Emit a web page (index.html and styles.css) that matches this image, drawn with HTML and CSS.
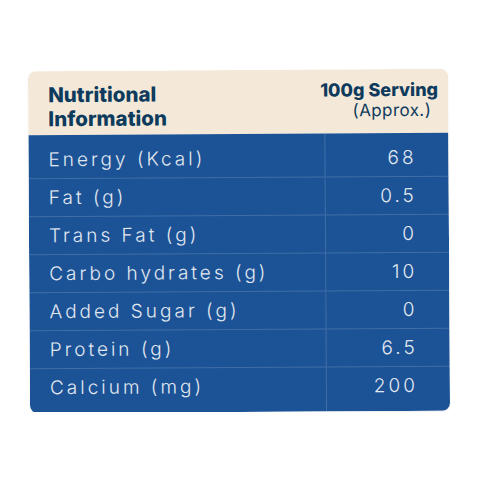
FILE: index.html
```html
<!DOCTYPE html>
<html lang="en">
<head>
  <meta charset="UTF-8">
  <meta name="viewport" content="width=device-width, initial-scale=1.0">
  <title>Nutritional Information</title>
  <link rel="stylesheet" href="styles.css">
</head>
<body>
  <div class="card">
    <div class="card-head">
      <div class="head-title">Nutritional<br>Information</div>
      <div class="head-serving">
        <div class="serving">100g Serving</div>
        <div class="approx">(Approx.)</div>
      </div>
    </div>

    <div class="card-body">
      <div class="row"><div class="label">Energy (Kcal)</div><div class="value">68</div></div>
      <div class="row"><div class="label">Fat (g)</div><div class="value">0.5</div></div>
      <div class="row"><div class="label">Trans Fat (g)</div><div class="value">0</div></div>
      <div class="row"><div class="label">Carbo hydrates (g)</div><div class="value">10</div></div>
      <div class="row"><div class="label">Added Sugar (g)</div><div class="value">0</div></div>
      <div class="row"><div class="label">Protein (g)</div><div class="value">6.5</div></div>
      <div class="row"><div class="label">Calcium (mg)</div><div class="value">200</div></div>
    </div>
  </div>
</body>
</html>
```

FILE: styles.css
```css
body { margin: 0; padding: 70px 0 0 29px; background: #fff; font-family: Inter, "Open Sans", sans-serif; }
.card { width: 420px; border-radius: 8px; overflow: hidden; transform: rotate(-0.35deg); box-shadow: 0 1px 2px rgba(0,0,0,0.08); }

/* header */
.card-head { display: flex; justify-content: space-between; background: #f4e9d8; color: #0e3b5d; height: 64px; padding: 12px 10px 0 20px; box-sizing: border-box; }
.head-title { font-size: 20.5px; font-weight: 800; line-height: 24px; }
.head-serving { text-align: right; padding-top: 1px; }
.serving { font-size: 18px; font-weight: 800; line-height: 20px; margin-top: -2px; }
.approx { font-size: 17px; font-weight: 400; line-height: 21px; padding-right: 7px; letter-spacing: 0.4px; }

/* rows */
.card-body { background: #1c5396; color: #e3e9f1; }
.row { display: grid; grid-template-columns: 1fr 124px; border-bottom: 1px solid rgba(255,255,255,0.16); }
.row:last-child { border-bottom: none; }
.label, .value { height: 37px; line-height: 37px; font-size: 19px; font-weight: 300; letter-spacing: 3px; }
.label { padding-left: 20px; }
.value { text-align: right; padding-right: 32px; border-left: 1px solid rgba(255,255,255,0.16); }
.row:first-child > div { padding-top: 6px; }
.row:last-child > div { padding-bottom: 7px; }
```
